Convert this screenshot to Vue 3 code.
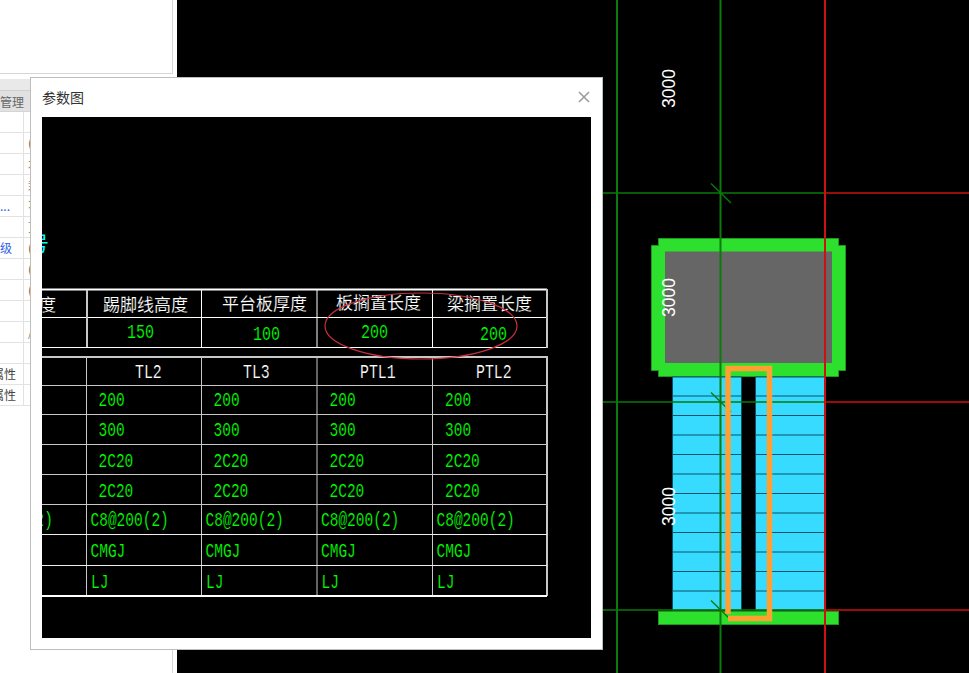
<script setup>
const rows = [
  {},
  { mark: '(', tone: 'brown' }, { mark: '木', tone: 'tan' }, { mark: '封', tone: 'tan' },
  { text: '...', link: true, mark: '不', tone: 'tan' }, { mark: '顶', tone: 'tan' },
  { text: '级', link: true, mark: '(', tone: 'brown' }, { mark: '(', tone: 'brown' },
  { mark: '(', tone: 'brown' }, {}, { mark: '/', tone: 'tan' }, {},
  { text: '属性', end: true }, { text: '属性', end: true }
]
const stairY = [396, 415.5, 435, 454.5, 474, 493.5, 513, 532.5, 552, 571.5, 591]
const crossY = [193, 402, 610]
const dims = [88, 297, 506]

const headers = [
  { t: '度', x: 39, y: 311 },
  { t: '踢脚线高度', x: 103, y: 311 },
  { t: '平台板厚度', x: 222, y: 310 },
  { t: '板搁置长度', x: 336, y: 309 },
  { t: '梁搁置长度', x: 447, y: 310 }
]
const titles = [
  { t: 'TL2', x: 135 }, { t: 'TL3', x: 243 }, { t: 'PTL1', x: 360 }, { t: 'PTL2', x: 476 }
]
const tops = [
  { t: '150', x: 127, y: 338 }, { t: '100', x: 253, y: 340 },
  { t: '200', x: 361, y: 338 }, { t: '200', x: 480, y: 340 }
]
const grid = [
  { t: '200', y: 406, xs: [98.5, 213.5, 329.5, 445] },
  { t: '300', y: 436, xs: [98.5, 213.5, 329.5, 445] },
  { t: '2C20', y: 466.5, xs: [98.5, 213.5, 329.5, 445] },
  { t: '2C20', y: 496.5, xs: [98.5, 213.5, 329.5, 445] },
  { t: 'C8@200(2)', y: 526, xs: [90.5, 205.5, 321, 436.5] },
  { t: 'CMGJ', y: 557, xs: [90.5, 205.5, 321, 436.5] },
  { t: 'LJ', y: 588, xs: [91, 206, 321.5, 437] }
]
const gridCells = grid.flatMap((r) => r.xs.map((x) => ({ t: r.t, x, y: r.y })))
const colX = [201, 316.5, 432]
const rowY = [385, 414, 444, 474, 504]
</script>

<template>
  <div class="screen">
    <aside class="side">
      <div class="side-top"></div>
      <div class="side-list">
        <div class="band"></div>
        <div class="tabs"><span>管理</span></div>
        <div v-for="(r, i) in rows" :key="i" class="row">
          <span class="name" :class="{ link: r.link, end: r.end }">{{ r.text }}</span>
          <span class="val" :class="r.tone">{{ r.mark }}</span>
        </div>
      </div>
    </aside>

    <svg class="cad" viewBox="177 0 792 673" width="792" height="673">
      <rect x="177" y="0" width="792" height="673" fill="#000" />
      <path d="M658.5 238.5H838.5V245.5H845.5V370.5H838.5V376.5H658.5V370.5H651.5V245.5H658.5Z" fill="#2ee02e" stroke="#1f9a1f" />
      <rect x="665" y="251.5" width="167" height="111.5" fill="#666" />
      <rect x="672.5" y="377" width="69" height="233" fill="#36dbff" stroke="#0b5566" />
      <rect x="755.5" y="377" width="69.5" height="233" fill="#36dbff" stroke="#0b5566" />
      <g stroke="#0b5566">
        <template v-for="y in stairY" :key="y">
          <path :d="`M672 ${y}H741.5M755 ${y}H825`" />
        </template>
      </g>
      <rect x="658.5" y="611.5" width="180" height="13" fill="#2ee02e" stroke="#1f9a1f" />

      <g fill="none" stroke="#0a7a0a">
        <path d="M617 0V673M720.5 0V673" stroke-width="2" />
        <template v-for="y in crossY" :key="y">
          <path :d="`M177 ${y}H825M711 ${y - 9.5}L731 ${y + 10}`" stroke-width="1.4" />
        </template>
      </g>
      <g fill="none" stroke="#cc1111">
        <path d="M825 0V673" stroke-width="2" />
        <template v-for="y in crossY" :key="y">
          <path :d="`M826 ${y}H969`" stroke-width="1.4" />
        </template>
      </g>
      <path d="M728 614V368.5H769.5V618.5H728" fill="none" stroke="#ffa030" stroke-width="5.5" />

      <text
        v-for="y in dims" :key="y" class="dim"
        :transform="`translate(675 ${y + 20}) rotate(-90)`"
        textLength="39" lengthAdjust="spacingAndGlyphs"
      >3000</text>
    </svg>

    <section class="dialog">
      <header class="dialog-head">
        <span class="dialog-title">参数图</span>
        <svg class="close" viewBox="0 0 12 12" width="12" height="12">
          <path d="M1 1L11 11M11 1L1 11" stroke="#999" stroke-width="1.5" fill="none" />
        </svg>
      </header>
      <svg class="figure" viewBox="42 117 549 521" width="549" height="521">
        <rect x="42" y="117" width="549" height="521" fill="#000" />
        <text x="28" y="251" class="cyan">号</text>

        <g fill="none" stroke="#fff">
          <path d="M42 289.5H547" stroke-width="2" />
          <path d="M42 317.5H547M42 347.5H547" />
          <path d="M201.5 290V347M317 290V347M432.5 290V347" />
        </g>
        <g fill="none" stroke="#c8c8c8">
          <path d="M87 290V347" stroke-width="2" />
          <path d="M547 289V348" stroke-width="2" />
          <path d="M42 357H547" stroke-width="2" />
          <path d="M547 356V596" stroke-width="2" />
          <path d="M86.5 358V596" />
          <template v-for="x in colX" :key="x">
            <path :d="`M${x + 0.5} 358V596`" />
          </template>
          <template v-for="y in rowY" :key="y">
            <path :d="`M42 ${y + 0.5}H547`" />
          </template>
        </g>
        <path d="M42 534.5H547M42 565.5H547" fill="none" stroke="#eee" />
        <path d="M42 596H547" fill="none" stroke="#fff" stroke-width="2" />

        <text v-for="h in headers" :key="h.t" :x="h.x" :y="h.y" class="head">{{ h.t }}</text>
        <text
          v-for="h in titles" :key="h.t" :x="h.x" y="378" class="mono white"
          :textLength="h.t.length * 8.9" lengthAdjust="spacingAndGlyphs"
        >{{ h.t }}</text>
        <text
          v-for="c in tops" :key="c.x" :x="c.x" :y="c.y" class="mono green"
          :textLength="c.t.length * 9" lengthAdjust="spacingAndGlyphs"
        >{{ c.t }}</text>
        <text
          v-for="c in gridCells" :key="`${c.t}-${c.x}-${c.y}`" :x="c.x" :y="c.y" class="mono green"
          :textLength="c.t.length * 8.7" lengthAdjust="spacingAndGlyphs"
        >{{ c.t }}</text>
        <text x="35" y="526" class="mono green" textLength="18" lengthAdjust="spacingAndGlyphs">2)</text>

        <ellipse cx="421" cy="326" rx="96" ry="33" fill="none" stroke="#c8323c" stroke-width="1.2" />
      </svg>
    </section>
  </div>
</template>

<style>
html, body { margin: 0; background: #000; }
</style>

<style scoped>
.screen {
  position: relative;
  display: flex;
  width: 969px;
  height: 673px;
  overflow: hidden;
  background: #000;
  font-family: "Noto Sans CJK SC", "Liberation Sans", sans-serif;
}
.side {
  width: 177px;
  flex: none;
  background: #fff;
  display: flex;
  flex-direction: column;
}
.side-top {
  width: 172px;
  height: 73px;
  border-right: 1px solid #d6d6d6;
  border-bottom: 1px solid #d6d6d6;
  margin-bottom: 5px;
  flex: none;
}
.side-list {
  width: 172px;
  flex: 1;
  border-right: 1px solid #d6d6d6;
  overflow: hidden;
}
.band { height: 11px; background: #e9e9e9; border-bottom: 1px solid #cfcfcf; }
.tabs {
  height: 21px;
  background: #e1e1e1;
  border-bottom: 1px solid #d4d4d4;
  font-size: 12px;
  line-height: 22px;
  color: #666;
  box-sizing: border-box;
}
.row {
  display: flex;
  height: 21px;
  box-sizing: border-box;
  border-bottom: 1px solid #e2e2e2;
  font-size: 12px;
  line-height: 20px;
  color: #444;
}
.name {
  width: 24px;
  flex: none;
  box-sizing: border-box;
  border-right: 1px solid #e2e2e2;
  display: flex;
  overflow: hidden;
  white-space: nowrap;
}
.name.end { justify-content: flex-end; padding-right: 7px; }
.link { color: #2f62e8; }
.val { margin-left: 4px; white-space: nowrap; }
.brown { color: #7a5a3a; }
.tan { color: #a08a60; }

.cad { display: block; flex: none; }

.dialog {
  position: absolute;
  left: 30px;
  top: 77px;
  width: 573px;
  height: 573px;
  box-sizing: border-box;
  background: #fff;
  border: 1px solid #bdbdbd;
  padding: 0 11px;
  display: flex;
  flex-direction: column;
}
.dialog-head {
  height: 39px;
  flex: none;
  display: flex;
  align-items: center;
  justify-content: space-between;
  box-sizing: border-box;
}
.dialog-title {
  font-size: 14px;
  line-height: 37px;
  color: #333;
}
.close { margin: 0 1px 2px 0; }
.figure { display: block; flex: none; }

.head {
  font-family: "Noto Sans CJK SC", sans-serif;
  font-size: 17px;
  fill: #fff;
  stroke: #000;
  stroke-width: 0.15px;
}
.cyan {
  font-family: "Noto Sans CJK SC", sans-serif;
  font-size: 21px;
  fill: #00ffff;
}
.mono {
  font-family: "Liberation Mono", monospace;
  font-size: 20px;
  stroke: #000;
  stroke-width: 0.2px;
}
.green { fill: #00ff00; }
.white { fill: #fff; }
.dim {
  font-family: "Liberation Sans", sans-serif;
  font-size: 18px;
  fill: #fff;
}
</style>
